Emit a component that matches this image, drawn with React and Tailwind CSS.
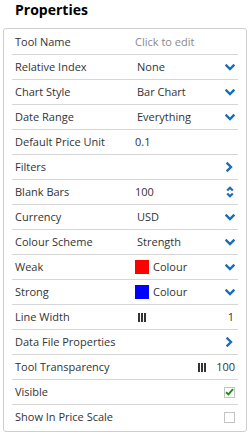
const ChevronDown = () => (
  <svg width="10" height="7" viewBox="0 0 10 7" className="shrink-0">
    <path d="M1.5 1.5 L5 5 L8.5 1.5" fill="none" stroke="#1b6db5" strokeWidth="2.4" strokeLinecap="square" />
  </svg>
);

const ChevronRight = () => (
  <svg width="7" height="10" viewBox="0 0 7 10" className="shrink-0">
    <path d="M1.5 1.5 L5 5 L1.5 8.5" fill="none" stroke="#1b6db5" strokeWidth="2.4" strokeLinecap="square" />
  </svg>
);

const Spinner = () => (
  <svg width="8" height="12" viewBox="0 0 8 12" className="shrink-0">
    <path d="M1.2 4.5 L4 1.7 L6.8 4.5" fill="none" stroke="#1b6db5" strokeWidth="2.2" />
    <path d="M1.2 7.5 L4 10.3 L6.8 7.5" fill="none" stroke="#1b6db5" strokeWidth="2.2" />
  </svg>
);

const Bars = () => (
  <svg width="8" height="9" viewBox="0 0 8 9" className="shrink-0">
    <rect x="0" y="0" width="2" height="9" fill="#333" />
    <rect x="3" y="0" width="2" height="9" fill="#333" />
    <rect x="6" y="0" width="2" height="9" fill="#333" />
  </svg>
);

const Checkbox = ({ checked }) => (
  <div className="w-[11px] h-[11px] border border-[#c4c4c4] bg-white flex items-center justify-center">
    {checked && (
      <svg width="9" height="8" viewBox="0 0 9 8">
        <path d="M1 4.2 L3.4 6.4 L8 1.2" fill="none" stroke="#1f8f1f" strokeWidth="2" />
      </svg>
    )}
  </div>
);

function Row({ label, children, last }) {
  return (
    <div className={`flex items-center h-[25px] px-[3px] ${last ? '' : 'border-b border-[#d6d6d6]'}`}>
      <div className="w-[120px] shrink-0 text-[#333]">{label}</div>
      <div className="flex-1 flex items-center min-w-0">{children}</div>
    </div>
  );
}

const Select = ({ value }) => (
  <>
    <span className="pl-[2px] flex-1 text-[#333]">{value}</span>
    <ChevronDown />
  </>
);

const ColourSelect = ({ colour }) => (
  <>
    <span className={`w-[14px] h-[14px] ${colour}`} />
    <span className="pl-[4px] flex-1 text-[#333]">Colour</span>
    <ChevronDown />
  </>
);

export default function App() {
  return (
    <div className="w-[251px] h-[434px] bg-white text-[11px]" style={{ fontFamily: '"Open Sans", sans-serif' }}>
      <div className="h-[28px] pl-[15px] pt-[0px] text-[14px] font-bold text-black leading-[19px]">Properties</div>
      <div className="ml-[3px] w-[244px] border border-[#cfcfcf] rounded-[3px] pt-[1px] pb-[1px]">
        <div className="mx-[8px]">
          <Row label="Tool Name">
            <span className="text-[#8a8a8a]">Click to edit</span>
          </Row>
          <Row label="Relative Index"><Select value="None" /></Row>
          <Row label="Chart Style"><Select value="Bar Chart" /></Row>
          <Row label="Date Range"><Select value="Everything" /></Row>
          <Row label="Default Price Unit"><span className="text-[#333]">0.1</span></Row>
          <Row label="Filters">
            <span className="flex-1" />
            <span className="pr-[2px]"><ChevronRight /></span>
          </Row>
          <Row label="Blank Bars">
            <span className="flex-1 text-[#333]">100</span>
            <span className="pr-[1px]"><Spinner /></span>
          </Row>
          <Row label="Currency"><Select value="USD" /></Row>
          <Row label="Colour Scheme"><Select value="Strength" /></Row>
          <Row label="Weak"><ColourSelect colour="bg-[#ff0000]" /></Row>
          <Row label="Strong"><ColourSelect colour="bg-[#0000ff]" /></Row>
          <Row label="Line Width">
            <span className="pl-[3px]"><Bars /></span>
            <span className="flex-1" />
            <span className="text-[#333] pr-[1px]">1</span>
          </Row>
          <Row label="Data File Properties">
            <span className="flex-1" />
            <span className="pr-[2px]"><ChevronRight /></span>
          </Row>
          <Row label="Tool Transparency">
            <span className="flex-1" />
            <Bars />
            <span className="text-[#333] pl-[10px]">100</span>
          </Row>
          <Row label="Visible">
            <span className="flex-1" />
            <Checkbox checked />
          </Row>
          <Row label="Show In Price Scale" last>
            <span className="flex-1" />
            <Checkbox />
          </Row>
        </div>
      </div>
    </div>
  );
}
